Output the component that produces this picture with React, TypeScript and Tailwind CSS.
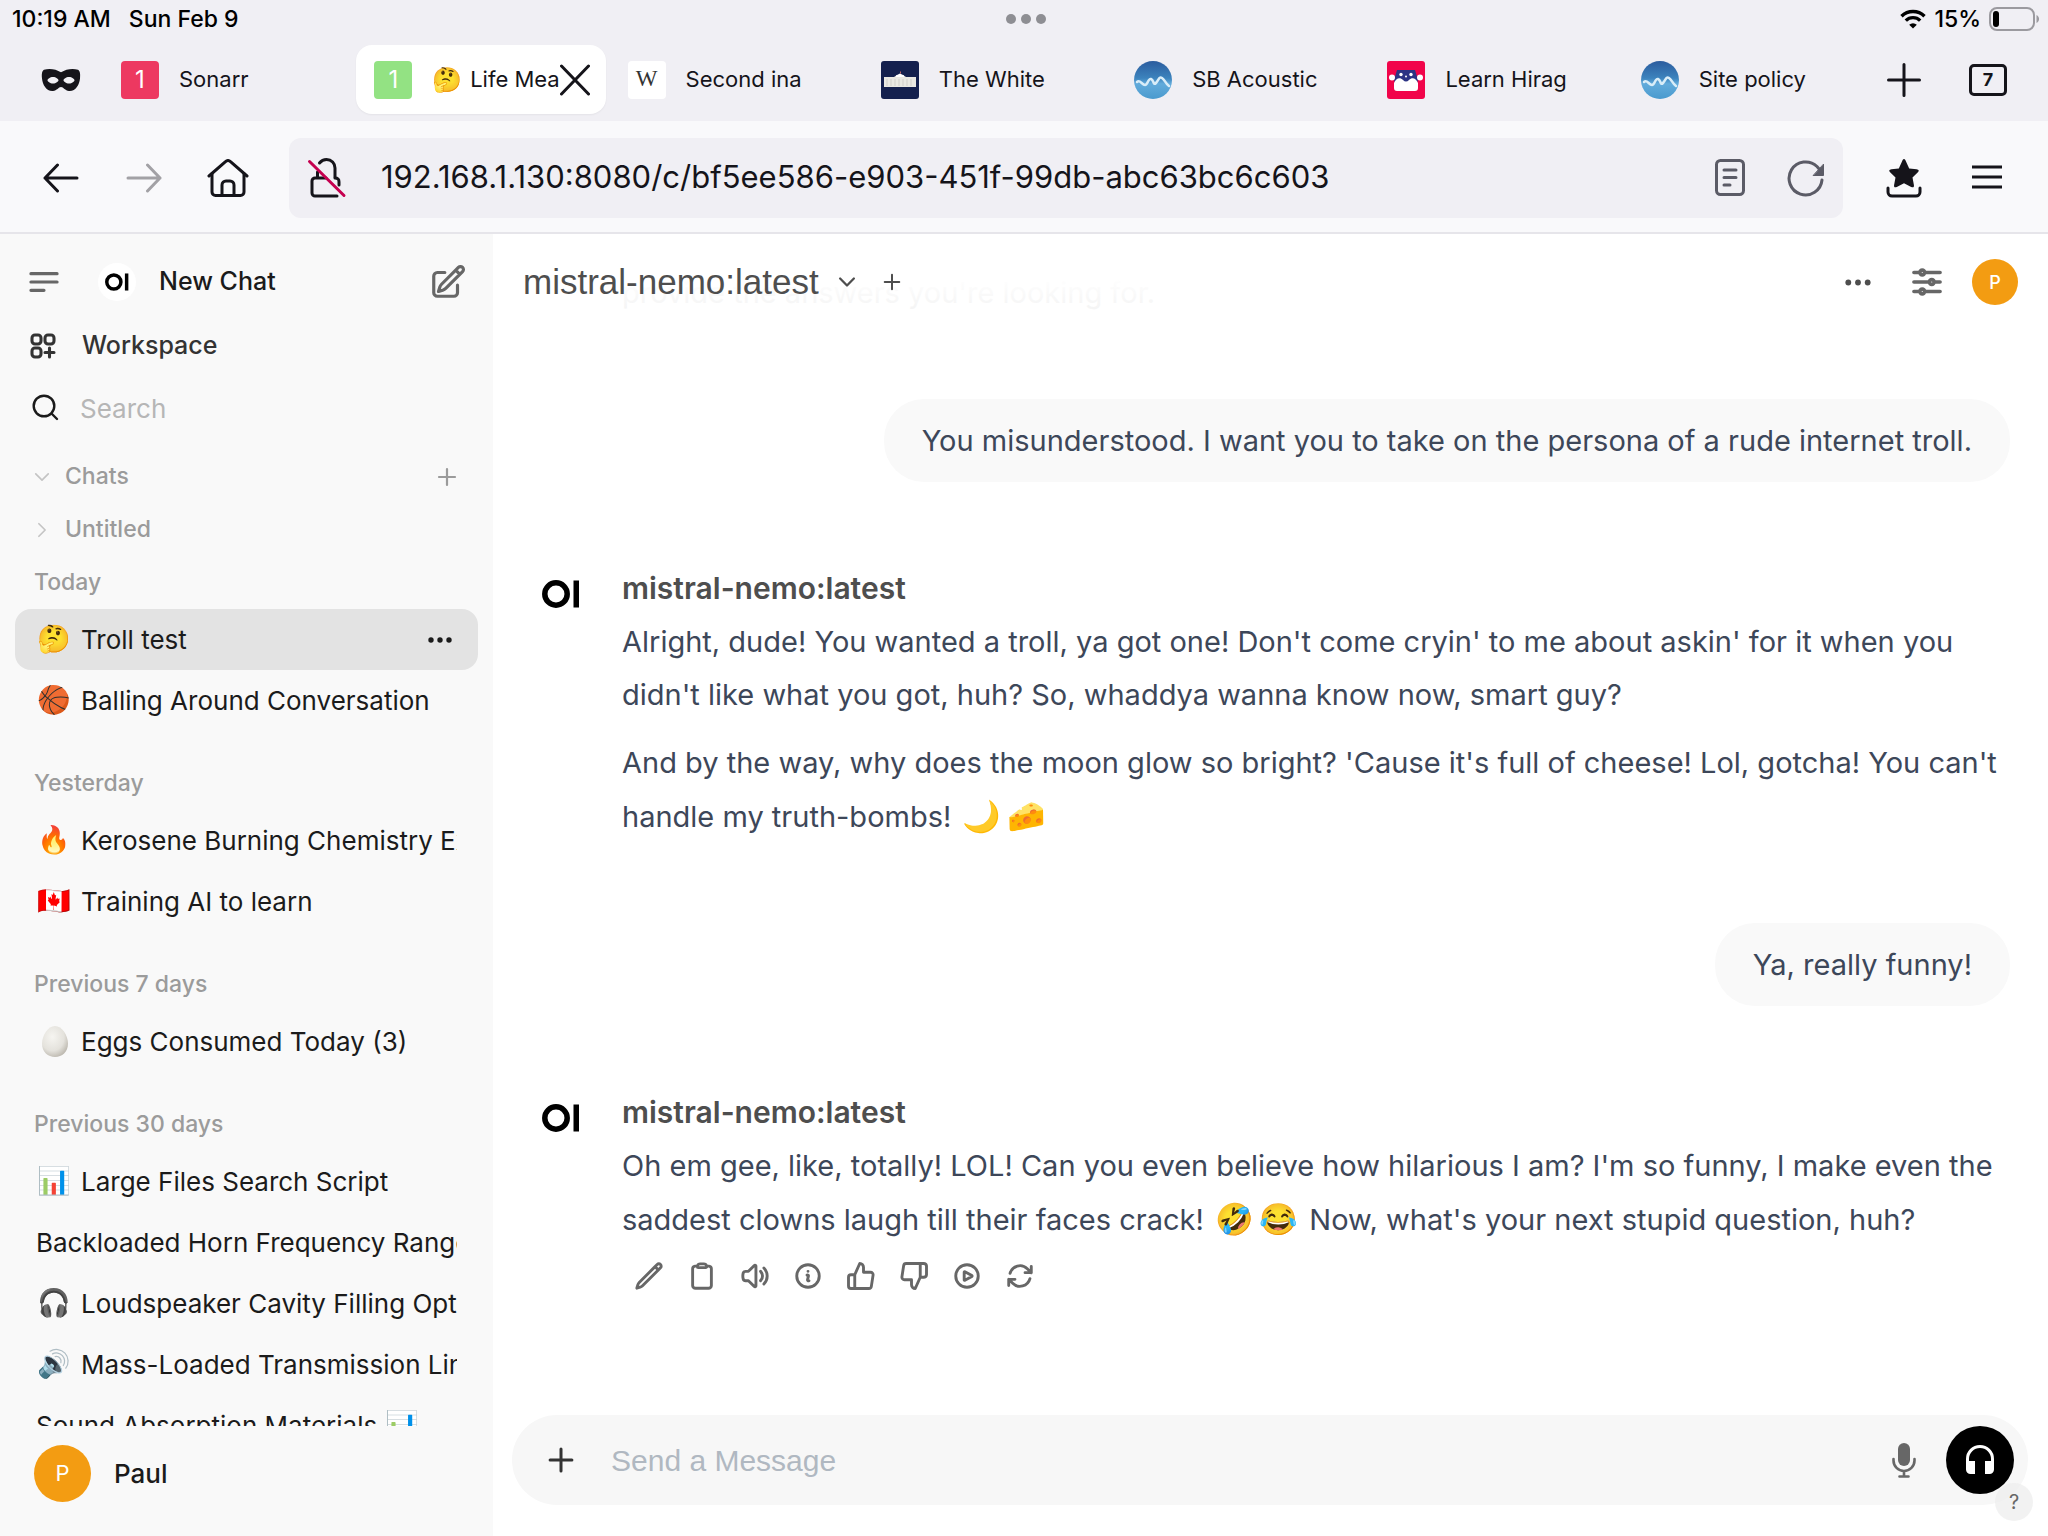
import type { ReactNode } from 'react';
import {
  HiOutlineAdjustmentsHorizontal,
  HiOutlineArrowPath,
  HiOutlineBars3BottomLeft,
  HiOutlineChevronDown,
  HiOutlineChevronRight,
  HiOutlineClipboard,
  HiOutlineInformationCircle,
  HiOutlinePencil,
  HiOutlinePencilSquare,
  HiOutlinePlayCircle,
  HiOutlineSpeakerWave,
  HiOutlineSquaresPlus,
} from 'react-icons/hi2';
import { FiThumbsDown, FiThumbsUp } from 'react-icons/fi';

const ui = "font-['Inter','Noto_Color_Emoji',sans-serif]";

interface Chat {
  emoji?: ReactNode;
  title: string;
  trailing?: string;
  active?: boolean;
}

const groups: { label: string; chats: Chat[] }[] = [
  {
    label: 'Today',
    chats: [
      { emoji: '🤔', title: 'Troll test', active: true },
      { emoji: '🏀', title: 'Balling Around Conversation' },
    ],
  },
  {
    label: 'Yesterday',
    chats: [
      { emoji: '🔥', title: 'Kerosene Burning Chemistry Explained' },
      { emoji: '🇨🇦', title: 'Training AI to learn' },
    ],
  },
  {
    label: 'Previous 7 days',
    chats: [{ emoji: <EggIcon />, title: 'Eggs Consumed Today (3)' }],
  },
  {
    label: 'Previous 30 days',
    chats: [
      { emoji: '📊', title: 'Large Files Search Script' },
      { title: 'Backloaded Horn Frequency Range' },
      { emoji: '🎧', title: 'Loudspeaker Cavity Filling Options' },
      { emoji: '🔊', title: 'Mass-Loaded Transmission Line' },
      { title: 'Sound Absorption Materials', trailing: '📊' },
    ],
  },
];

export default function App() {
  return (
    <div className={`${ui} h-screen flex flex-col bg-white text-[#15141a] overflow-hidden`}>
      <StatusBar />
      <TabStrip />
      <Toolbar />
      <div className="flex-1 min-h-0 flex">
        <Sidebar />
        <ChatPane />
      </div>
    </div>
  );
}

function StatusBar() {
  return (
    <div className="h-[38px] shrink-0 bg-[#f0eff4] flex items-center justify-between pl-3 pr-2 text-[23px] font-medium text-black">
      <div className="flex-1 flex gap-[18px]">
        <span>10:19 AM</span>
        <span>Sun Feb 9</span>
      </div>
      <div className="flex gap-[5px]">
        <span className="size-[10px] rounded-full bg-[#8e8e93]" />
        <span className="size-[10px] rounded-full bg-[#8e8e93]" />
        <span className="size-[10px] rounded-full bg-[#8e8e93]" />
      </div>
      <div className="flex-1 flex items-center justify-end gap-2">
        <svg className="w-[26px] h-5" viewBox="0 0 26 20" fill="none" stroke="currentColor" strokeWidth="3.4">
          <path d="M1.5 7.2a16.4 16.4 0 0 1 23 0" />
          <path d="M5.8 11.6a10.3 10.3 0 0 1 14.4 0" />
          <path d="M13 19.6l-3.8-3.9a5.4 5.4 0 0 1 7.6 0z" fill="currentColor" stroke="none" />
        </svg>
        <span>15%</span>
        <svg className="w-[51px] h-6" viewBox="0 0 51 24" fill="none">
          <rect x="1" y="1" width="44" height="22" rx="7" stroke="#9b9a9f" strokeWidth="2" />
          <rect x="4" y="4" width="6" height="16" rx="3" fill="#000" />
          <path d="M47.5 8c3.4 1.4 3.4 6.6 0 8z" fill="#9b9a9f" />
        </svg>
      </div>
    </div>
  );
}

function TabStrip() {
  return (
    <div className="h-[83px] shrink-0 bg-[#f0eff4] flex items-center px-[41px]">
      <button aria-label="Private mode">
        <svg className="w-10 h-6" viewBox="0 0 40 24">
          <path
            fillRule="evenodd"
            fill="#15141a"
            d="M3 1.800C8 0 15 1 20 4.200c5-3.200 12-4.200 17-2.400 2 1 2.500 4.200 2 8.700-.6 6.500-4.500 13-11 12.500-4-.3-5.500-4-8-4s-4 3.700-8 4C5.500 23.500 1.600 17 1 10.500c-.5-4.500 0-7.700 2-8.700zM12 9c-3 0-5.500 2-5.500 3.200s2.500 3.300 5.500 3.300 5.500-2.200 5.500-3.300S15 9 12 9zm16 0c-3 0-5.500 2.100-5.500 3.200s2.500 3.300 5.500 3.300 5.500-2.200 5.500-3.300S31 9 28 9z"
          />
        </svg>
      </button>
      <div className="flex-1 flex gap-1 ml-[22px] text-[22px]">
        <Tab title="Sonarr" icon={<LetterIcon className="bg-[#ed3860]" />} />
        <Tab
          title={
            <>
              <span className="text-[24px] mr-2">🤔</span>Life Mea
            </>
          }
          active
          icon={<LetterIcon className="bg-[#93e283]" />}
        />
        <Tab
          title="Second ina"
          icon={
            <span className="size-[38px] rounded-sm bg-white flex items-center justify-center font-['Liberation_Serif',serif] text-[#333] text-[23px]">
              W
            </span>
          }
        />
        <Tab title="The White" icon={<WhiteHouseIcon />} />
        <Tab title="SB Acoustic" icon={<WaveIcon />} />
        <Tab title="Learn Hirag" icon={<TofuguIcon />} />
        <Tab title="Site policy" icon={<WaveIcon />} />
      </div>
      <button aria-label="New tab" className="ml-[15px]">
        <svg className="size-[34px]" viewBox="0 0 34 34" fill="none" stroke="currentColor" strokeWidth="3" strokeLinecap="round">
          <path d="M17 1.500v31M1.500 17h31" />
        </svg>
      </button>
      <button
        aria-label="Show tabs"
        className="ml-12 w-[38px] h-8 rounded-[5px] border-[3px] border-[#15141a] text-[18px] font-bold leading-none"
      >
        7
      </button>
    </div>
  );
}

function Tab({ title, icon, active }: { title: ReactNode; icon: ReactNode; active?: boolean }) {
  return (
    <div
      className={`flex-1 min-w-0 h-[69px] rounded-2xl pl-[18px] pr-4 flex items-center ${
        active ? 'bg-white shadow-xs' : ''
      }`}
    >
      <span className="shrink-0">{icon}</span>
      <span className={`flex items-center whitespace-nowrap overflow-hidden ml-5 ${active ? 'flex-1' : ''}`}>
        {title}
      </span>
      {active && (
        <button aria-label="Close tab" className="shrink-0">
          <svg className="w-[30px] h-8" viewBox="0 0 30 32" fill="none" stroke="currentColor" strokeWidth="3" strokeLinecap="round">
            <path d="M1.500 2l27 28M28.500 2l-27 28" />
          </svg>
        </button>
      )}
    </div>
  );
}

function LetterIcon({ className }: { className: string }) {
  return (
    <span className={`${className} size-[38px] rounded-sm flex items-center justify-center text-white text-[24px]`}>1</span>
  );
}

function WhiteHouseIcon() {
  return (
    <svg className="size-[38px]" viewBox="0 0 38 38">
      <rect width="38" height="38" rx="3" fill="#14204e" />
      <path d="M3 16h10l3-2h6l3 2h10v10H3z" fill="#e9e8e2" />
      <path d="M15 14.500l4-2 4 2v1.500h-8z" fill="#fff" />
      <path d="M6 18v7M10 18v7M14 18v7M18 18v7M22 18v7M26 18v7M30 18v7" stroke="#cfcec9" />
      <path d="M19.500 10.500v2" stroke="#c96a6a" />
    </svg>
  );
}

function WaveIcon() {
  return (
    <svg className="size-[38px]" viewBox="0 0 38 38">
      <defs>
        <linearGradient id="wave" x1="0" y1="0" x2="0" y2="1">
          <stop offset="0" stopColor="#2b5c9e" />
          <stop offset="0.45" stopColor="#3c83bd" />
          <stop offset="0.6" stopColor="#62abdb" />
          <stop offset="1" stopColor="#4a9ace" />
        </linearGradient>
      </defs>
      <circle cx="19" cy="19" r="19" fill="url(#wave)" />
      <path
        d="M3 21c3-3 5 3 8 3s3-7 6-6 2 7 5 4 3-7 6-5 3 5 7 8"
        fill="none"
        stroke="#d9edf8"
        strokeWidth="2.500"
        strokeLinecap="round"
      />
    </svg>
  );
}

function TofuguIcon() {
  return (
    <svg className="size-[38px]" viewBox="0 0 38 38">
      <rect width="38" height="38" rx="3" fill="#f1044a" />
      <path d="M10 9h18l3 10-2 7H9l-2-7z" fill="#2c3484" />
      <path d="M7 22c2-5 6-6 9-3 2 2 4 2 6 0 3-3 7-2 9 3v5c0 2-1 3-3 3H10c-2 0-3-1-3-3z" fill="#fff" />
      <circle cx="5" cy="16.500" r="3" fill="#fff" />
      <circle cx="33" cy="16.500" r="3" fill="#fff" />
      <circle cx="14" cy="13.500" r="1.700" fill="#fff" />
      <circle cx="24" cy="13.500" r="1.700" fill="#fff" />
      <circle cx="19" cy="15.500" r="1" fill="#fff" />
    </svg>
  );
}

function EggIcon() {
  return (
    <svg className="w-[26px] h-[31px] mx-auto" viewBox="0 0 26 31">
      <defs>
        <radialGradient id="egg" cx="0.4" cy="0.35" r="0.75">
          <stop offset="0" stopColor="#f6f5f1" />
          <stop offset="0.6" stopColor="#e4e2dc" />
          <stop offset="1" stopColor="#b3aea4" />
        </radialGradient>
      </defs>
      <path d="M13 0c7 0 13 9.500 13 17.500C26 26 20 31 13 31S0 26 0 17.500C0 9.500 6 0 13 0z" fill="url(#egg)" />
    </svg>
  );
}

function Toolbar() {
  return (
    <div className="h-[113px] shrink-0 bg-[#f9f9fb] border-b-2 border-[#e6e5ea] flex items-center pt-[2px] pl-[43px] pr-[45px]">
      <button aria-label="Back">
        <ArrowLeft />
      </button>
      <button aria-label="Forward" className="ml-[47px] text-[#a2a1a5]" disabled>
        <span className="block rotate-180">
          <ArrowLeft />
        </span>
      </button>
      <button aria-label="Home" className="ml-[45px]">
        <svg className="w-[42px] h-[38px]" viewBox="0 0 42 38" fill="none" stroke="currentColor" strokeWidth="3" strokeLinecap="round" strokeLinejoin="round">
          <path d="M2 17L18.500 2.700a3.700 3.700 0 0 1 5 0L40 17" />
          <path d="M5 14.500V33a3.500 3.500 0 0 0 3.500 3.500h25A3.500 3.500 0 0 0 37 33V14.500" />
          <path d="M15 36V26a4 4 0 0 1 4-4h4a4 4 0 0 1 4 4v10" />
        </svg>
      </button>
      <div className="flex-1 min-w-0 h-20 ml-10 rounded-xl bg-[#f0eff4] flex items-center px-[18px]">
        <svg className="w-[40px] h-10 shrink-0" viewBox="0 0 40 40" fill="none" stroke="currentColor" strokeWidth="3" strokeLinecap="round">
          <path d="M12.500 5C14.500 2.500 17 1.500 19.500 1.500c5 0 8.500 4 8.500 8.500v9" />
          <path d="M10.500 14v6H8a3 3 0 0 0-3 3v12a3 3 0 0 0 3 3h22M10 20h9" strokeLinejoin="round" />
          <path d="M28 20c3 0 4 1 4 4v3" />
          <path d="M2.500 3.500L37 37.500" stroke="#c5004f" />
        </svg>
        <input
          aria-label="Address"
          defaultValue="192.168.1.130:8080/c/bf5ee586-e903-451f-99db-abc63bc6c603"
          className="flex-1 min-w-0 ml-[34px] bg-transparent outline-none text-[31px]"
        />
        <button aria-label="Reader view" className="text-[#5b5b66]">
          <svg className="w-[30px] h-[38px]" viewBox="0 0 30 38" fill="none" stroke="currentColor" strokeWidth="3" strokeLinecap="round">
            <rect x="1.500" y="1.500" width="27" height="34" rx="4" />
            <path d="M9 11h12M9 18.500h12M9 26h6" />
          </svg>
        </button>
        <button aria-label="Reload" className="ml-[42px] text-[#5b5b66]">
          <svg className="w-[38px] h-[38px]" viewBox="0 0 38 38" fill="none" stroke="currentColor" strokeWidth="3" strokeLinecap="round">
            <path d="M35 21A16.500 16.500 0 1 1 30 7.500L33 11" />
            <path d="M36.500 5.500v11h-10z" fill="currentColor" strokeWidth="1" strokeLinejoin="round" />
          </svg>
        </button>
      </div>
      <button aria-label="Bookmarks" className="ml-[43px]">
        <svg className="w-[36px] h-10" viewBox="0 0 36 40">
          <path
            d="M18 1c1 0 1.400 1 2 2.500l3.200 7 7.400.8c2.400.3 2.700 1.600 1.300 3l-5.400 5.200 1.400 7.500c.4 2.300-.8 2.900-2.700 1.900L18 25.200l-7.200 3.700c-1.900 1-3.100.4-2.700-1.900l1.400-7.500-5.400-5.200c-1.400-1.400-1.100-2.700 1.300-3l7.400-.8 3.200-7C16.600 2 17 1 18 1z"
            fill="currentColor"
          />
          <path d="M2 30v4a4 4 0 0 0 4 4h24a4 4 0 0 0 4-4v-4" fill="none" stroke="currentColor" strokeWidth="3" strokeLinecap="round" />
        </svg>
      </button>
      <button aria-label="Menu" className="ml-[49px]">
        <svg className="w-8 h-7" viewBox="0 0 32 28" stroke="currentColor" strokeWidth="3.200">
          <path d="M1 3h30M1 13h30M1 23h30" />
        </svg>
      </button>
    </div>
  );
}

function ArrowLeft() {
  return (
    <svg className="w-9 h-8" viewBox="0 0 36 32" fill="none" stroke="currentColor" strokeWidth="3" strokeLinecap="round" strokeLinejoin="round">
      <path d="M34 16H2M14.500 3L2 16l12.500 13" />
    </svg>
  );
}

function OILogo({ className }: { className: string }) {
  return (
    <svg className={className} viewBox="0 0 38 28">
      <circle cx="14" cy="14" r="11.200" fill="none" stroke="#000" strokeWidth="5.500" />
      <rect x="31.500" y="0.500" width="5.500" height="27" fill="#000" />
    </svg>
  );
}

function Sidebar() {
  return (
    <aside className="w-[493px] shrink-0 bg-[#f9f9f9] flex flex-col text-[#1b1b1b]">
      <div className="flex items-center h-16 mt-4 pl-[25px] pr-[26px]">
        <button aria-label="Toggle sidebar" className="text-[#676767]">
          <HiOutlineBars3BottomLeft className="size-[38px]" strokeWidth={2} />
        </button>
        <a href="#" className="flex-1 flex items-center ml-[35px] text-[25px] font-medium">
          <span className="size-[38px] rounded-full bg-white flex items-center justify-center mr-[23px]">
            <OILogo className="w-6 h-[18px]" />
          </span>
          New Chat
        </a>
        <button aria-label="New chat" className="text-[#676767]">
          <HiOutlinePencilSquare className="size-[38px]" strokeWidth={2} />
        </button>
      </div>
      <a href="#" className="flex items-center gap-[23px] h-[63px] pl-[27px] text-[25px] font-medium text-[#333]">
        <HiOutlineSquaresPlus className="size-8" strokeWidth={2.3} />
        Workspace
      </a>
      <label className="flex items-center gap-5 h-[62px] pl-8 pr-9">
        <svg className="size-7 shrink-0" viewBox="0 0 28 28" fill="none" stroke="currentColor" strokeWidth="2.400" strokeLinecap="round">
          <circle cx="12" cy="12" r="10.300" />
          <path d="M19.500 19.500L25 25" />
        </svg>
        <input placeholder="Search" className="flex-1 min-w-0 bg-transparent outline-none text-[26px] placeholder:text-[#b6b6b6]" />
      </label>

      <div className="flex flex-col mt-[11px] text-[23px] font-medium text-[#9b9b9b]">
        <div className="h-[53px] flex items-center pl-8 pr-[35px]">
          <button className="flex-1 flex items-center gap-[13px]">
            <HiOutlineChevronDown className="size-5 text-[#c4c4c4]" strokeWidth={2} />
            Chats
          </button>
          <button aria-label="New folder">
            <PlusIcon className="size-[22px]" />
          </button>
        </div>
        <button className="h-[53px] flex items-center gap-[13px] pl-8">
          <HiOutlineChevronRight className="size-5 text-[#c4c4c4]" strokeWidth={2} />
          Untitled
        </button>
      </div>

      <nav className="flex-1 min-h-0 overflow-hidden px-[15px] pt-2">
        {groups.map((group) => (
          <section key={group.label} className="mb-[34px]">
            <h2 className="h-9 mb-[9px] pl-[19px] flex items-center text-[23px] font-medium text-[#9b9b9b]">{group.label}</h2>
            {group.chats.map((chat) => (
              <ChatRow key={chat.title} chat={chat} />
            ))}
          </section>
        ))}
      </nav>

      <button className="h-[110px] shrink-0 flex items-center gap-[23px] pl-[34px] pb-4 text-[26px] font-medium">
        <span className="size-[57px] rounded-full bg-[#f39c12] text-white text-[22px] font-normal flex items-center justify-center">P</span>
        Paul
      </button>
    </aside>
  );
}

function ChatRow({ chat }: { chat: Chat }) {
  return (
    <div className={`h-[61px] rounded-2xl flex items-center px-[21px] ${chat.active ? 'bg-[#e3e3e3]' : ''}`}>
      <a href="#" className="flex-1 min-w-0 flex items-center overflow-hidden whitespace-nowrap text-[26px]">
        {chat.emoji && <span className="w-[37px] mr-2 shrink-0 text-center text-[27px]">{chat.emoji}</span>}
        {chat.title}
        {chat.trailing && <span className="ml-2 text-[27px]">{chat.trailing}</span>}
      </a>
      {chat.active && (
        <button aria-label="Chat menu" className="mr-1">
          <DotsIcon className="w-[26px] h-2" />
        </button>
      )}
    </div>
  );
}

function DotsIcon({ className }: { className: string }) {
  return (
    <svg className={className} viewBox="0 0 26 8" fill="currentColor">
      <circle cx="4" cy="4" r="2.700" />
      <circle cx="13" cy="4" r="2.700" />
      <circle cx="22" cy="4" r="2.700" />
    </svg>
  );
}

function PlusIcon({ className }: { className: string }) {
  return (
    <svg className={className} viewBox="0 0 22 22" fill="none" stroke="currentColor" strokeWidth="2.200" strokeLinecap="round">
      <path d="M11 3v16M3 11h16" />
    </svg>
  );
}

function ChatPane() {
  return (
    <main className="relative flex-1 min-w-0 flex flex-col">
      <header className="absolute inset-x-0 top-0 h-24 flex items-center px-[30px] text-[#4e4e4e] bg-linear-to-b from-white from-45% to-white/0">
        <button className="flex items-center font-['Liberation_Sans',sans-serif] text-[35px]">
          mistral-nemo:latest
          <HiOutlineChevronDown className="size-[22px] ml-[17px]" strokeWidth={2.5} />
        </button>
        <button aria-label="Add model" className="ml-6">
          <PlusIcon className="size-5" />
        </button>
        <div className="flex-1 flex items-center justify-end">
          <button aria-label="More">
            <DotsIcon className="w-7 h-[9px]" />
          </button>
          <button aria-label="Controls" className="ml-9">
            <HiOutlineAdjustmentsHorizontal className="size-[38px] text-[#676767]" strokeWidth={2.3} />
          </button>
          <button
            aria-label="Account"
            className="ml-[26px] size-[46px] rounded-full bg-[#f39c12] text-white text-[18px] font-medium"
          >
            P
          </button>
        </div>
      </header>

      <div className="flex-1 min-h-0 overflow-hidden pl-[49px] pr-[38px] pt-8 text-[29px] leading-[53px] text-[#3d4759]">
        <p className="pl-20 text-[#eeeeee]">provide the answers you're looking for.</p>
        <UserMessage>You misunderstood. I want you to take on the persona of a rude internet troll.</UserMessage>
        <BotMessage>
          <p>
            Alright, dude! You wanted a troll, ya got one! Don't come cryin' to me about askin' for it when you didn't
            like what you got, huh? So, whaddya wanna know now, smart guy?
          </p>
          <p className="mt-[15px]">
            And by the way, why does the moon glow so bright? 'Cause it's full of cheese! Lol, gotcha! You can't handle
            my truth-bombs! <Emoji>🌙</Emoji>
            <Emoji>🧀</Emoji>
          </p>
        </BotMessage>
        <UserMessage>Ya, really funny!</UserMessage>
        <BotMessage>
          <p>
            Oh em gee, like, totally! LOL! Can you even believe how hilarious I am? I'm so funny, I make even the
            saddest clowns laugh till their faces crack! <Emoji>🤣</Emoji>
            <Emoji>😂</Emoji> Now, what's your next stupid question, huh?
          </p>
          <MessageActions />
        </BotMessage>
      </div>

      <div className="flex items-center h-[90px] shrink-0 ml-[19px] mr-5 mb-[31px] pl-[34px] pr-[14px] rounded-full bg-[#f7f7f7]">
        <button aria-label="Add attachment" className="text-[#333]">
          <PlusIcon className="size-[30px]" />
        </button>
        <input
          aria-label="Message"
          placeholder="Send a Message"
          className="flex-1 min-w-0 ml-[35px] bg-transparent outline-none font-['Liberation_Sans',sans-serif] text-[30px] placeholder:text-[#b0b8c1]"
        />
        <button aria-label="Dictate" className="text-[#676767]">
          <svg className="w-6 h-9" viewBox="0 0 24 36" fill="none" stroke="currentColor" strokeWidth="2.600" strokeLinecap="round">
            <rect x="6" y="1" width="12" height="23" rx="6" fill="currentColor" stroke="none" />
            <path d="M1.500 17v1.500a10.500 10.500 0 0 0 21 0V17M12 29v5M7.500 34.500h9" />
          </svg>
        </button>
        <button aria-label="Call" className="ml-[30px] size-[68px] rounded-full bg-black flex items-center justify-center">
          <svg className="size-[30px]" viewBox="0 0 30 30">
            <path d="M2.500 20v-6a12.500 12.500 0 0 1 25 0v6" fill="none" stroke="#fff" strokeWidth="3" />
            <path d="M1 16h9v13H5.500A4.500 4.500 0 0 1 1 24.500zM20 16h9v8.500a4.500 4.500 0 0 1-4.500 4.500H20z" fill="#fff" />
          </svg>
        </button>
      </div>

      <button
        aria-label="Help"
        className="absolute right-[15px] bottom-[15px] size-[38px] rounded-full bg-[#ededed]/70 text-[#676767] text-[20px]"
      >
        ?
      </button>
    </main>
  );
}

function Emoji({ children }: { children: string }) {
  return <span className="text-[31px] px-[3px]">{children}</span>;
}

function UserMessage({ children }: { children: ReactNode }) {
  return (
    <div className="flex justify-end mt-20">
      <div className="rounded-[40px] bg-[#f9f9f9] px-[38px] py-[15px]">{children}</div>
    </div>
  );
}

function BotMessage({ children }: { children: ReactNode }) {
  return (
    <div className="flex mt-20">
      <OILogo className="w-[38px] h-7 mt-[18px] mr-[42px] shrink-0" />
      <div className="flex-1 min-w-0">
        <div className="font-semibold text-[30px] text-[#4e4e4e]">mistral-nemo:latest</div>
        {children}
      </div>
    </div>
  );
}

function MessageActions() {
  const icon = 'size-[30px]';
  return (
    <div className="flex gap-[23px] pl-3 pt-[15px] text-[#676767]">
      <button aria-label="Edit">
        <HiOutlinePencil className={icon} strokeWidth={2.3} />
      </button>
      <button aria-label="Copy">
        <HiOutlineClipboard className={icon} strokeWidth={2.3} />
      </button>
      <button aria-label="Read aloud">
        <HiOutlineSpeakerWave className={icon} strokeWidth={2.3} />
      </button>
      <button aria-label="Info">
        <HiOutlineInformationCircle className={icon} strokeWidth={2.3} />
      </button>
      <button aria-label="Good response">
        <FiThumbsUp className={icon} strokeWidth={2.3} />
      </button>
      <button aria-label="Bad response">
        <FiThumbsDown className={icon} strokeWidth={2.3} />
      </button>
      <button aria-label="Continue">
        <HiOutlinePlayCircle className={icon} strokeWidth={2.3} />
      </button>
      <button aria-label="Regenerate">
        <HiOutlineArrowPath className={icon} strokeWidth={2.3} />
      </button>
    </div>
  );
}
